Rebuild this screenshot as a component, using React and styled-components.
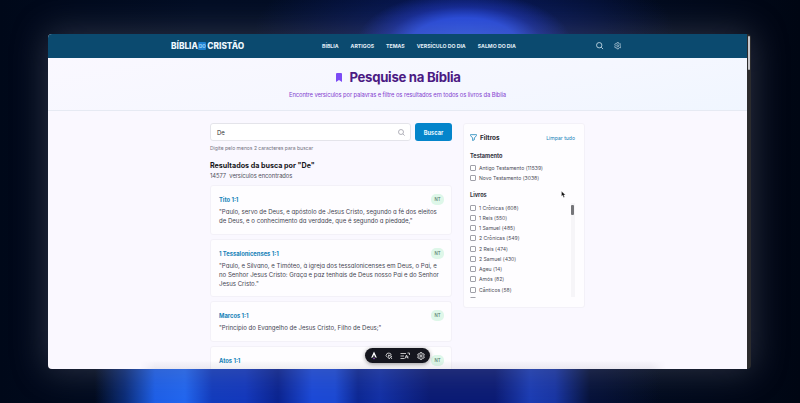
import React from "react";
import styled, { createGlobalStyle } from "styled-components";

const Global = createGlobalStyle`
  *{box-sizing:border-box}
  body{margin:0;background:#000716;font-family:Inter,sans-serif;-webkit-font-smoothing:antialiased}
  h1,h2,h3,p{margin:0}
`;
const Backdrop = styled.div`
  width:800px;height:403px;padding:34px 49px 34px 48px;overflow:hidden;
  background:
    radial-gradient(ellipse 108px 52px at 464px 44px,#2d58e8 0%,rgba(40,76,225,.95) 50%,rgba(28,52,180,.6) 72%,rgba(10,25,90,0) 100%) no-repeat,
    radial-gradient(ellipse 210px 75px at 464px 30px,rgba(14,36,140,.75),rgba(5,20,70,0)) no-repeat,
    linear-gradient(90deg,rgba(2,12,36,0) 95px,#0b2c78 125px,#1d5fe8 155px,#2166f0 185px,#123bbd 212px,#1338bd 245px,#0a2390 278px,#1b49d8 312px,#1b49d4 335px,#0c2794 358px,#1230a6 380px,#0a1a74 430px,#0a1a74 495px,#1b3cb4 530px,#1835a4 555px,rgba(6,18,60,.9) 590px,rgba(2,12,36,0) 660px) 0 363px/800px 40px no-repeat,
    linear-gradient(90deg,#000819,#020d24 25%,#020c22 75%,#000613);
`;
const Window = styled.main`
  position:relative;height:335px;display:flex;border-radius:4px;background:#2b2b2d;
  box-shadow:0 0 34px 2px rgba(125,125,145,.34);
`;
const Page = styled.div`
  width:699px;height:335px;overflow:hidden;border-radius:4px 0 0 4px;background:#faf8ff;
`;
const Scroll = styled.div`width:4px;padding:2px 1px 0 1px;`;
const ScrollThumb = styled.div`height:34px;width:2px;border-radius:2px;background:#c8c8cc;`;
const Header = styled.header`
  height:24px;background:#0b4a6f;color:#eef8ff;display:flex;align-items:center;padding-left:123px;
`;
const Logo = styled.div`
  width:151px;display:flex;align-items:center;font:800 8.3px Inter,sans-serif;
`;
const LogoBox = styled.span`
  width:8px;height:8px;margin:0 1px 0 .5px;border-radius:1px;background:#1c7fd0;color:#a5dcff;
  display:flex;align-items:center;justify-content:center;font-size:4.4px;font-weight:700;
`;
const Nav = styled.nav`
  display:flex;gap:12px;width:274px;font-size:5.2px;font-weight:700;white-space:nowrap;color:#e0eef7;
`;
const HeadIcons = styled.div`display:flex;gap:10px;color:#d5e6f0;`;
const Hero = styled.section`
  height:53px;border-bottom:1px solid #e6eaf3;background:linear-gradient(170deg,#faf8ff 0%,#f5f7ff 60%,#f0f6ff);
  display:flex;flex-direction:column;align-items:center;padding-top:9px;
`;
const HeroTitle = styled.h1`
  display:flex;align-items:center;gap:7px;padding-left:2px;font-size:13.2px;line-height:20px;color:#4b1a83;letter-spacing:-.3px;
`;
const HeroText = styled.p`margin-top:3px;font-size:5.85px;line-height:10px;color:#8440cf;letter-spacing:-.1px;`;
const Content = styled.div`
  display:grid;grid-template-columns:242px 122px;gap:11px;padding:12px 0 0 162px;
`;
const SearchRow = styled.div`display:flex;gap:4px;height:18px;`;
const Field = styled.div`
  width:201px;border:1px solid #e4e4ea;border-radius:3px;background:#fff;display:flex;align-items:center;
  justify-content:space-between;padding:0 5px 0 6px;font-size:6px;color:#333;
`;
const Button = styled.div`
  width:37px;border-radius:3px;background:#0485cb;color:#eaf8ff;font-size:5.7px;font-weight:700;
  display:flex;align-items:center;justify-content:center;
`;
const Hint = styled.p`margin-top:3px;font-size:5px;line-height:8px;color:#71717d;`;
const ResultsTitle = styled.h2`margin-top:9px;font-size:7.15px;line-height:10px;color:#161620;`;
const Count = styled.p`font-size:5.8px;line-height:9px;color:#4f4f5b;white-space:pre;letter-spacing:-.04px;`;
const Card = styled.article`
  height:${p => p.$h}px;margin-bottom:4px;padding:8px 7px 0 8px;border:1px solid #f3f1f8;border-radius:3px;background:#fefdff;
`;
const Cards = styled.div`margin-top:5px;`;
const CardHead = styled.div`
  display:flex;justify-content:space-between;align-items:center;height:11px;color:#1682b8;font-size:5.8px;font-weight:700;
`;
const Badge = styled.span`
  width:13px;height:11px;border-radius:5px;background:#def7e9;color:#527466;font-size:4.3px;font-weight:500;
  display:flex;align-items:center;justify-content:center;
`;
const Verse = styled.p`
  margin-top:2px;font-size:6.07px;line-height:9px;color:#454553;white-space:nowrap;font-feature-settings:"cv11";
  span{display:block;width:max-content}
`;
const Filters = styled.aside`
  height:185px;padding:7.5px 9px 0 6px;background:#fefdff;border:1px solid #f3f1f8;border-radius:3px;color:#34343f;
`;
const FiltersHead = styled.div`
  display:flex;align-items:center;height:12px;gap:3px;color:#1682b8;font-size:5.1px;
`;
const FiltersTitle = styled.h2`flex:1;color:#282832;font-size:6.4px;`;
const GroupTitle = styled.h3`margin-top:${p => p.$top}px;font-size:5.6px;line-height:9px;`;
const Options = styled.div`margin-top:2.5px;height:${p => p.$h}px;overflow:hidden;flex:1;`;
const Option = styled.div`
  height:10.25px;display:flex;align-items:center;gap:3px;font-size:5.1px;white-space:nowrap;color:#4d4d59;
`;
const Box = styled.span`width:6px;height:6px;border:1px solid #a0a0a9;border-radius:1px;background:#fff;`;
const ListRow = styled.div`display:flex;`;
const Rail = styled.div`width:4px;height:94px;margin-top:3px;background:#f6f5f8;`;
const RailThumb = styled.div`height:10px;width:3px;margin-top:2px;border-radius:1px;background:#757579;`;
const Toolbar = styled.div`
  position:absolute;left:317px;top:314px;width:65px;height:15px;border-radius:8px;background:#15161e;color:#fff;
  display:flex;align-items:center;justify-content:space-between;padding:0 5px;box-shadow:0 1px 4px rgba(0,0,0,.4);
`;
const BottomFade = styled.div`
  position:absolute;left:92px;right:85px;bottom:0;height:9px;
  background:linear-gradient(rgba(40,40,60,0),rgba(40,40,60,.08));
  mask-image:linear-gradient(90deg,transparent,#000 15px,#000 calc(100% - 15px),transparent);
`;
const Pointer = styled.svg`position:absolute;left:513px;top:157px;`;

const Search = ({ s = 7, c = "currentColor" }) => (
  <svg width={s} height={s} viewBox="0 0 14 14" fill="none" stroke={c} strokeWidth="1.5"><circle cx="6" cy="6" r="5" /><path d="m9.7 9.7 3.5 3.5" /></svg>
);
const Gear = ({ s = 7, w = 2 }) => (
  <svg width={s} height={s} viewBox="0 0 24 24" fill="none" stroke="currentColor" strokeWidth={w} strokeLinejoin="round"><path d="m9.5 2-.6 3-2.4 1.4-2.8-1L2.2 8.6 4 11.5v1L2.2 15.4l1.5 3.2 2.8-1L8.9 19l.6 3h5l.6-3 2.4-1.4 2.8 1 1.5-3.2-1.8-2.9v-1l1.8-2.9-1.5-3.2-2.8 1L15.1 5l-.6-3Z" /><circle cx="12" cy="12" r="3.2" /></svg>
);
const results = [
  ["Tito 1:1", 50, ["\"Paulo, servo de Deus, e apóstolo de Jesus Cristo, segundo a fé dos eleitos", "de Deus, e o conhecimento da verdade, que é segundo a piedade,\""]],
  ["1 Tessalonicenses 1:1", 58, ["\"Paulo, e Silvano, e Timóteo, à igreja dos tessalonicenses em Deus, o Pai, e", "no Senhor Jesus Cristo: Graça e paz tenhais de Deus nosso Pai e do Senhor", "Jesus Cristo.\""]],
  ["Marcos 1:1", 41, ["\"Princípio do Evangelho de Jesus Cristo, Filho de Deus;\""]],
  ["Atos 1:1", 50, []],
];
const books = ["1 Crônicas (608)", "1 Reis (550)", "1 Samuel (485)", "2 Crônicas (549)", "2 Reis (474)", "2 Samuel (430)", "Ageu (14)", "Amós (82)", "Cânticos (58)"];
const Check = ({ children }) => <Option><Box />{children}</Option>;

export default function App() {
  return (
    <Backdrop>
      <Global />
      <Window>
        <Page>
          <Header>
            <Logo>BÍBLIA<LogoBox>DO</LogoBox>CRISTÃO</Logo>
            <Nav><span>BÍBLIA</span><span>ARTIGOS</span><span>TEMAS</span><span>VERSÍCULO DO DIA</span><span>SALMO DO DIA</span></Nav>
            <HeadIcons><Search s={7.5} /><Gear s={7.5} /></HeadIcons>
          </Header>
          <Hero>
            <HeroTitle><svg width="6" height="9" viewBox="0 0 6 9"><path d="M0 1q0-1 1-1h4q1 0 1 1v8L3 7 0 9Z" fill="#7c4bf5" /></svg>Pesquise na Bíblia</HeroTitle>
            <HeroText>Encontre versículos por palavras e filtre os resultados em todos os livros da Bíblia</HeroText>
          </Hero>
          <Content>
            <section>
              <SearchRow><Field>De<Search c="#9a9aa5" /></Field><Button>Buscar</Button></SearchRow>
              <Hint>Digite pelo menos 2 caracteres para buscar</Hint>
              <ResultsTitle>Resultados da busca por "De"</ResultsTitle>
              <Count>14577  versículos encontrados</Count>
              <Cards>
                {results.map(([title, h, lines]) => (
                  <Card key={title} $h={h}>
                    <CardHead>{title}<Badge>NT</Badge></CardHead>
                    <Verse>{lines.map(l => <span key={l}>{l}</span>)}</Verse>
                  </Card>
                ))}
              </Cards>
            </section>
            <Filters>
              <FiltersHead>
                <svg width="7" height="7" viewBox="0 0 16 16" fill="none" stroke="currentColor" strokeWidth="1.8" strokeLinejoin="round"><path d="M1 1.5h14v2L10 9v4l-4 2V9L1 3.5Z" /></svg>
                <FiltersTitle>Filtros</FiltersTitle>Limpar tudo
              </FiltersHead>
              <GroupTitle $top={8}>Testamento</GroupTitle>
              <Options $h={21}><Check>Antigo Testamento (11539)</Check><Check>Novo Testamento (3038)</Check></Options>
              <GroupTitle $top={7}>Livros</GroupTitle>
              <ListRow>
                <Options $h={95}>{books.map(b => <Check key={b}>{b}</Check>)}<Check /></Options>
                <Rail><RailThumb /></Rail>
              </ListRow>
            </Filters>
          </Content>
        </Page>
        <Scroll><ScrollThumb /></Scroll>
        <BottomFade />
        <Pointer width="5" height="7" viewBox="0 0 5 7"><path d="M.5.3v5l1.2-1 .9 2.1 1-.4-.9-2 1.7-.1Z" fill="#111" stroke="#fff" strokeWidth=".3" /></Pointer>
        <Toolbar>
          <svg width="8" height="9" viewBox="0 0 16 18"><path d="M8 1 2 14q3-2 4-1 2-3 4 0 2-1 4 1Z" fill="#fff" /><path d="M6.500 9h3v3h-3Z" fill="#15161e" /><path d="M6 14h4l-2 3Z" fill="#9c50d8" /></svg>
          <svg width="8" height="8" viewBox="0 0 16 16" fill="none" stroke="#ddd" strokeWidth="1.7"><path d="M5 11 2 7l2-4 4-1 4 2v2" /><path d="m7 6 7 3-3 1.500 3 3.500M7 6l1 8 3-3" /></svg>
          <svg width="10" height="8" viewBox="0 0 20 16" fill="none" stroke="#ddd" strokeWidth="1.7"><path d="M1 3h11M1 8h7M1 13h8M10 13l3-7 3 7M11 10h6M15 2h4v4" /></svg>
          <Gear w={2.5} s={8} />
        </Toolbar>
      </Window>
    </Backdrop>
  );
}
